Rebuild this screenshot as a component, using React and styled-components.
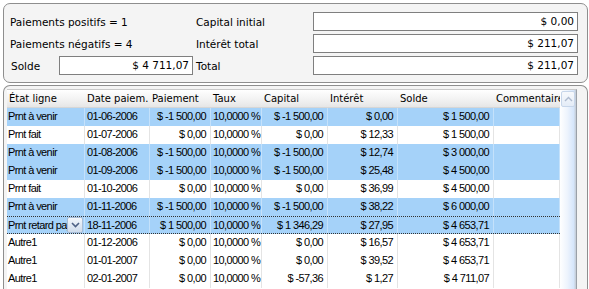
import React from "react";
import styled, { createGlobalStyle, css } from "styled-components";

const Global = createGlobalStyle`
  html, body { margin: 0; padding: 0; background: #ffffff; }
  body { font-family: "DejaVu Sans", Verdana, sans-serif; color: #000; }
`;

const Page = styled.div`
  width: 589px;
  height: 289px;
  overflow: hidden;
  padding: 3px 1px 0 3px;
  box-sizing: border-box;
  display: flex;
  flex-direction: column;
  gap: 2px;
`;

const TopPanel = styled.div`
  height: 80px;
  box-sizing: border-box;
  border: 1px solid #8e8e8e;
  border-radius: 7px;
  background: #f4f4f4;
  padding: 8px 9px 0 6px;
  display: grid;
  grid-template-columns: 49px 134px 120px 1fr;
  grid-template-rows: 19px 19px 19px;
  row-gap: 3px;
  align-items: center;
`;

const Label = styled.div`
  font-size: 10.5px;
  white-space: nowrap;
  grid-column: ${(p) => p.$span || "auto"};
  padding-left: ${(p) => p.$indent || 0}px;
`;

const Field = styled.div`
  height: 19px;
  box-sizing: border-box;
  border: 1px solid #7f7f7f;
  background: #fff;
  font-size: 10.5px;
  text-align: right;
  line-height: 17px;
  padding-right: 3px;
`;

const BottomPanel = styled.div`
  flex: 1;
  box-sizing: border-box;
  border: 1px solid #8e8e8e;
  border-bottom: none;
  border-radius: 7px 7px 0 0;
  background: #f4f4f4;
  padding: 3px 10px 0 3px;
  display: flex;
  min-height: 0;
`;

const Grid = styled.div`
  width: 553px;
  background: #fff;
  border-top: 1px solid #c9c9c9;
  display: flex;
  flex-direction: column;
`;

const cols = [78, 65, 61, 51, 66, 70, 96, 66];
const colTemplate = cols.map((c) => c + "px").join(" ");

const HeaderRow = styled.div`
  display: grid;
  grid-template-columns: ${colTemplate};
  height: 18px;
  background: linear-gradient(#ffffff, #f1f1f1 60%, #e6e6e6);
  border-bottom: 1px solid #d6d6d6;
  box-sizing: border-box;
`;

const HeadCell = styled.div`
  font-family: "DejaVu Sans", Verdana, sans-serif;
  font-size: 10px;
  line-height: 17px;
  padding-left: 2px;
  white-space: nowrap;
  overflow: hidden;
`;

const Row = styled.div`
  display: grid;
  grid-template-columns: ${colTemplate};
  height: 18px;
  box-sizing: border-box;
  background: ${(p) => (p.$blue ? "#a5d2f9" : "#ffffff")};
  ${(p) =>
    p.$focus &&
    css`
      border-top: 1px dotted #333;
      border-bottom: 1px dotted #333;
    `}
`;

const Cell = styled.div`
  font-family: "Liberation Sans", Arial, sans-serif;
  font-size: 11px;
  letter-spacing: -0.6px;
  line-height: 17px;
  white-space: nowrap;
  overflow: hidden;
  text-align: ${(p) => (p.$right ? "right" : "left")};
  padding: ${(p) => (p.$right ? "0 4px 0 0" : "0 0 0 2px")};
  border-right: 1px solid ${(p) => (p.$blue ? "#c4e1fb" : "#e4e4e4")};
  ${(p) => p.$first && css`padding-left: 1px;`}
  position: relative;
`;

const Drop = styled.div`
  position: absolute;
  right: 1px;
  top: 0;
  width: 16px;
  height: 16px;
  box-sizing: border-box;
  border: 1px solid #a7bcd6;
  border-radius: 2px;
  background: linear-gradient(#f2f6fb, #cfdcec);
  display: flex;
  align-items: center;
  justify-content: center;
`;

const ScrollBar = styled.div`
  width: 16px;
  background: linear-gradient(90deg, #ffffff, #eef4fd 45%, #d6e6fb 85%, #c3cad3 100%);
  border-top: 1px solid #c9c9c9;
  border-right: 1px solid #9aa0a8;
  display: flex;
  flex-direction: column;
  padding-top: 1px;
`;

const ScrollBtn = styled.div`
  height: 16px;
  margin: 0 1px;
  box-sizing: border-box;
  border: 1px solid #c7d6ea;
  border-radius: 2px;
  background: linear-gradient(#f7f9fc, #e4ecf7);
  display: flex;
  align-items: center;
  justify-content: center;
`;

const rows = [
  ["Prnt à venir", "01-06-2006", "$ -1 500,00", "10,0000 %", "$ -1 500,00", "$ 0,00", "$ 1 500,00", true],
  ["Prnt fait", "01-07-2006", "$ 0,00", "10,0000 %", "$ 0,00", "$ 12,33", "$ 1 500,00", false],
  ["Prnt à venir", "01-08-2006", "$ -1 500,00", "10,0000 %", "$ -1 500,00", "$ 12,74", "$ 3 000,00", true],
  ["Prnt à venir", "01-09-2006", "$ -1 500,00", "10,0000 %", "$ -1 500,00", "$ 25,48", "$ 4 500,00", true],
  ["Prnt fait", "01-10-2006", "$ 0,00", "10,0000 %", "$ 0,00", "$ 36,99", "$ 4 500,00", false],
  ["Prnt à venir", "01-11-2006", "$ -1 500,00", "10,0000 %", "$ -1 500,00", "$ 38,22", "$ 6 000,00", true],
  ["Prnt retard payé", "18-11-2006", "$ 1 500,00", "10,0000 %", "$ 1 346,29", "$ 27,95", "$ 4 653,71", true, true],
  ["Autre1", "01-12-2006", "$ 0,00", "10,0000 %", "$ 0,00", "$ 16,57", "$ 4 653,71", false],
  ["Autre1", "01-01-2007", "$ 0,00", "10,0000 %", "$ 0,00", "$ 39,52", "$ 4 653,71", false],
  ["Autre1", "02-01-2007", "$ 0,00", "10,0000 %", "$ -57,36", "$ 1,27", "$ 4 711,07", false],
];

const heads = ["État ligne", "Date paiem.", "Paiement", "Taux", "Capital", "Intérêt", "Solde", "Commentaire"];

export default function App() {
  return (
    <>
      <Global />
      <Page>
        <TopPanel>
          <Label $span="1 / 3">Paiements positifs = 1</Label>
          <Label $indent={3}>Capital initial</Label>
          <Field>$ 0,00</Field>
          <Label $span="1 / 3">Paiements négatifs = 4</Label>
          <Label $indent={3}>Intérêt total</Label>
          <Field>$ 211,07</Field>
          <Label $indent={1}>Solde</Label>
          <Field>$ 4 711,07</Field>
          <Label $indent={3}>Total</Label>
          <Field>$ 211,07</Field>
        </TopPanel>
        <BottomPanel>
          <Grid>
            <HeaderRow>
              {heads.map((h) => (
                <HeadCell key={h}>{h}</HeadCell>
              ))}
            </HeaderRow>
            {rows.map((r, i) => (
              <Row key={i} $blue={r[7]} $focus={r[8]}>
                <Cell $blue={r[7]} $first>
                  {r[0]}
                  {r[8] && (
                    <Drop>
                      <svg width="9" height="6" viewBox="0 0 9 6">
                        <path d="M1 1 L4.5 4.5 L8 1" fill="none" stroke="#4d6185" strokeWidth="1.6" />
                      </svg>
                    </Drop>
                  )}
                </Cell>
                <Cell $blue={r[7]}>{r[1]}</Cell>
                <Cell $blue={r[7]} $right>{r[2]}</Cell>
                <Cell $blue={r[7]}>{r[3]}</Cell>
                <Cell $blue={r[7]} $right>{r[4]}</Cell>
                <Cell $blue={r[7]} $right>{r[5]}</Cell>
                <Cell $blue={r[7]} $right>{r[6]}</Cell>
                <Cell $blue={r[7]}></Cell>
              </Row>
            ))}
          </Grid>
          <ScrollBar>
            <ScrollBtn>
              <svg width="9" height="6" viewBox="0 0 9 6">
                <path d="M1 5 L4.5 1.5 L8 5" fill="none" stroke="#aebbd0" strokeWidth="1.4" />
              </svg>
            </ScrollBtn>
          </ScrollBar>
        </BottomPanel>
      </Page>
    </>
  );
}
